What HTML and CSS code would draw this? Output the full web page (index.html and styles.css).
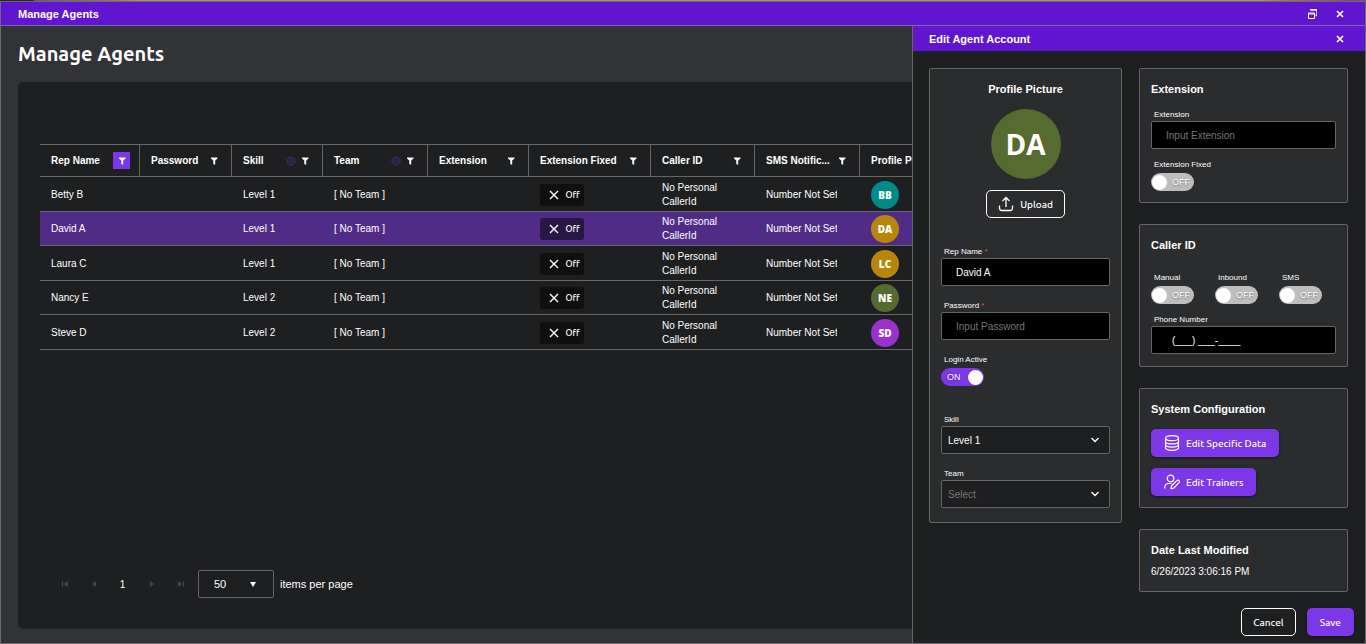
FILE: index.html
```html
<!DOCTYPE html>
<html lang="en">
<head>
    <meta charset="UTF-8">
    <meta name="viewport" content="width=device-width, initial-scale=1.0">
    <title>Manage Agents</title>
    <link rel="stylesheet" href="styles.css">
</head>
<body>
    <svg class="sprite" width="0" height="0" aria-hidden="true">
        <symbol id="icon-filter" viewBox="0 0 8 8"><path d="M1 .5h6.500v1L5.200 3.500v4H3.800l-.5-.8V3.500L1 1.500z" fill="currentColor"/></symbol>
        <symbol id="icon-gear" viewBox="0 0 12 12"><g fill="none" stroke="currentColor"><circle cx="6" cy="6" r="5.2" stroke-width="1.2" stroke-dasharray="2.3 1.78"/><circle cx="6" cy="6" r="4.200"/><circle cx="6" cy="6" r="1.7"/></g></symbol>
        <symbol id="icon-x" viewBox="0 0 10 10"><path d="M1 1l8 8M9 1L1 9" fill="none" stroke="currentColor" stroke-width="1.4"/></symbol>
        <symbol id="icon-close" viewBox="0 0 8 8"><path d="M1 1l6 6M7 1L1 7" fill="none" stroke="currentColor" stroke-width="1.7"/></symbol>
        <symbol id="icon-chevron" viewBox="0 0 8 6"><path d="M.5 1L4 4.500 7.500 1" fill="none" stroke="currentColor" stroke-width="1.3"/></symbol>
    </svg>

    <div class="window">
        <header class="title-bar">
            <span>Manage Agents</span>
            <div class="window-actions">
                <button class="icon-button" aria-label="Restore">
                    <svg width="9" height="10" viewBox="0 0 9 10"><path d="M2 0h7v6.5H7.5M2.5 1h6" fill="none" stroke="currentColor" stroke-width="1.4"/><path d="M.5 4h6v5.5h-6zM.5 5h6" fill="none" stroke="currentColor"/></svg>
                </button>
                <button class="icon-button" aria-label="Close window"><svg width="8" height="8"><use href="#icon-close"/></svg></button>
            </div>
        </header>

        <div class="window-body">
            <main class="content">
                <h1>Manage Agents</h1>
                <section class="card">
                    <table class="agents">
                        <colgroup>
                            <col class="col-name"><col class="col-password"><col class="col-skill"><col class="col-team"><col class="col-extension"><col class="col-fixed"><col class="col-caller"><col class="col-sms"><col class="col-picture">
                        </colgroup>
                        <thead>
                            <tr>
                                <th><div class="head"><span>Rep Name</span><button class="filter active" aria-label="Filter Rep Name"><svg width="8" height="8"><use href="#icon-filter"/></svg></button></div></th>
                                <th><div class="head"><span>Password</span><button class="filter" aria-label="Filter Password"><svg width="8" height="8"><use href="#icon-filter"/></svg></button></div></th>
                                <th><div class="head"><span>Skill</span><button class="gear" aria-label="Skill settings"><svg width="10" height="10"><use href="#icon-gear"/></svg></button><button class="filter" aria-label="Filter Skill"><svg width="8" height="8"><use href="#icon-filter"/></svg></button></div></th>
                                <th><div class="head"><span>Team</span><button class="gear" aria-label="Team settings"><svg width="10" height="10"><use href="#icon-gear"/></svg></button><button class="filter" aria-label="Filter Team"><svg width="8" height="8"><use href="#icon-filter"/></svg></button></div></th>
                                <th><div class="head"><span>Extension</span><button class="filter" aria-label="Filter Extension"><svg width="8" height="8"><use href="#icon-filter"/></svg></button></div></th>
                                <th><div class="head"><span>Extension Fixed</span><button class="filter" aria-label="Filter Extension Fixed"><svg width="8" height="8"><use href="#icon-filter"/></svg></button></div></th>
                                <th><div class="head"><span>Caller ID</span><button class="filter" aria-label="Filter Caller ID"><svg width="8" height="8"><use href="#icon-filter"/></svg></button></div></th>
                                <th><div class="head"><span>SMS Notific...</span><button class="filter" aria-label="Filter SMS Notifications"><svg width="8" height="8"><use href="#icon-filter"/></svg></button></div></th>
                                <th><div class="head"><span>Profile Picture</span></div></th>
                            </tr>
                        </thead>
                        <tbody>
                            <tr>
                                <td>Betty B</td><td></td><td>Level 1</td><td>[ No Team ]</td><td></td>
                                <td><button class="state"><svg width="10" height="10"><use href="#icon-x"/></svg>Off</button></td>
                                <td>No Personal CallerId</td><td><div class="clip">Number Not Set</div></td>
                                <td><span class="avatar teal">BB</span></td>
                            </tr>
                            <tr class="selected">
                                <td>David A</td><td></td><td>Level 1</td><td>[ No Team ]</td><td></td>
                                <td><button class="state"><svg width="10" height="10"><use href="#icon-x"/></svg>Off</button></td>
                                <td>No Personal CallerId</td><td><div class="clip">Number Not Set</div></td>
                                <td><span class="avatar gold">DA</span></td>
                            </tr>
                            <tr>
                                <td>Laura C</td><td></td><td>Level 1</td><td>[ No Team ]</td><td></td>
                                <td><button class="state"><svg width="10" height="10"><use href="#icon-x"/></svg>Off</button></td>
                                <td>No Personal CallerId</td><td><div class="clip">Number Not Set</div></td>
                                <td><span class="avatar gold">LC</span></td>
                            </tr>
                            <tr>
                                <td>Nancy E</td><td></td><td>Level 2</td><td>[ No Team ]</td><td></td>
                                <td><button class="state"><svg width="10" height="10"><use href="#icon-x"/></svg>Off</button></td>
                                <td>No Personal CallerId</td><td><div class="clip">Number Not Set</div></td>
                                <td><span class="avatar olive">NE</span></td>
                            </tr>
                            <tr>
                                <td>Steve D</td><td></td><td>Level 2</td><td>[ No Team ]</td><td></td>
                                <td><button class="state"><svg width="10" height="10"><use href="#icon-x"/></svg>Off</button></td>
                                <td>No Personal CallerId</td><td><div class="clip">Number Not Set</div></td>
                                <td><span class="avatar violet">SD</span></td>
                            </tr>
                        </tbody>
                    </table>

                    <nav class="pager" aria-label="Pages">
                        <button class="page-arrow" aria-label="First page" disabled><svg width="6" height="6" viewBox="0 0 6 6"><path d="M0 0h1v6H0zM6 0v6L1.500 3z" fill="currentColor"/></svg></button>
                        <button class="page-arrow" aria-label="Previous page" disabled><svg width="6" height="6" viewBox="0 0 6 6"><path d="M5 0v6L1 3z" fill="currentColor"/></svg></button>
                        <button class="page-number">1</button>
                        <button class="page-arrow" aria-label="Next page" disabled><svg width="6" height="6" viewBox="0 0 6 6"><path d="M1 0v6l4-3z" fill="currentColor"/></svg></button>
                        <button class="page-arrow" aria-label="Last page" disabled><svg width="6" height="6" viewBox="0 0 6 6"><path d="M5 0h1v6H5zM0 0v6l4.500-3z" fill="currentColor"/></svg></button>
                        <div class="dropdown page-size">
                            <select id="page-size"><option>50</option><option>100</option></select>
                            <svg width="6" height="5" viewBox="0 0 6 5"><path d="M0 0h6L3 5z" fill="currentColor"/></svg>
                        </div>
                        <label for="page-size">items per page</label>
                    </nav>
                </section>
            </main>

            <aside class="drawer">
                <header class="title-bar drawer-title">
                    <span>Edit Agent Account</span>
                    <button class="icon-button" aria-label="Close panel"><svg width="8" height="8"><use href="#icon-close"/></svg></button>
                </header>

                <form class="drawer-form">
                    <section class="panel profile">
                        <h2>Profile Picture</h2>
                        <span class="avatar large olive">DA</span>
                        <button type="button" class="button outline">
                            <svg width="16" height="16" viewBox="0 0 16 16"><path d="M8 11V2M4.500 5L8 1.500 11.500 5M1.500 9.500V12a2.500 2.500 0 0 0 2.500 2.500h8a2.500 2.500 0 0 0 2.500-2.500V9.500" fill="none" stroke="currentColor" stroke-width="1.300"/></svg>
                            Upload
                        </button>
                        <div class="fields">
                            <div class="field">
                                <label for="rep-name">Rep Name <span class="required">*</span></label>
                                <input type="text" id="rep-name" value="David A">
                            </div>
                            <div class="field">
                                <label for="password">Password <span class="required">*</span></label>
                                <input type="password" id="password" placeholder="Input Password">
                            </div>
                            <div class="field login">
                                <label for="login-active">Login Active</label>
                                <div class="switch"><span class="on">ON</span><input type="checkbox" id="login-active" checked><span class="off">OFF</span></div>
                            </div>
                            <div class="field">
                                <label for="skill">Skill</label>
                                <div class="dropdown">
                                    <select id="skill"><option>Level 1</option><option>Level 2</option></select>
                                    <svg width="8" height="6"><use href="#icon-chevron"/></svg>
                                </div>
                            </div>
                            <div class="field">
                                <label for="team">Team</label>
                                <div class="dropdown">
                                    <select id="team" class="empty"><option>Select</option></select>
                                    <svg width="8" height="6"><use href="#icon-chevron"/></svg>
                                </div>
                            </div>
                        </div>
                    </section>

                    <div class="side">
                        <section class="panel extension">
                            <h2>Extension</h2>
                            <div class="field">
                                <label for="extension">Extension</label>
                                <input type="text" id="extension" placeholder="Input Extension">
                            </div>
                            <div class="field">
                                <label for="extension-fixed">Extension Fixed</label>
                                <div class="switch"><span class="on">ON</span><input type="checkbox" id="extension-fixed"><span class="off">OFF</span></div>
                            </div>
                        </section>

                        <section class="panel caller">
                            <h2>Caller ID</h2>
                            <div class="switches">
                                <div class="field">
                                    <label for="manual">Manual</label>
                                    <div class="switch"><span class="on">ON</span><input type="checkbox" id="manual"><span class="off">OFF</span></div>
                                </div>
                                <div class="field">
                                    <label for="inbound">Inbound</label>
                                    <div class="switch"><span class="on">ON</span><input type="checkbox" id="inbound"><span class="off">OFF</span></div>
                                </div>
                                <div class="field">
                                    <label for="sms">SMS</label>
                                    <div class="switch"><span class="on">ON</span><input type="checkbox" id="sms"><span class="off">OFF</span></div>
                                </div>
                            </div>
                            <div class="field">
                                <label for="phone">Phone Number</label>
                                <input type="text" id="phone" class="phone" value="(___) ___-____">
                            </div>
                        </section>

                        <section class="panel system">
                            <h2>System Configuration</h2>
                            <button type="button" class="button primary">
                                <svg width="16" height="16" viewBox="0 0 16 16"><g fill="none" stroke="currentColor" stroke-width="1.200"><ellipse cx="8" cy="3.200" rx="6.500" ry="2.500"/><path d="M1.500 3.200v9.600c0 1.400 2.900 2.500 6.500 2.500s6.500-1.100 6.500-2.500V3.200M1.500 6.400c0 1.400 2.900 2.500 6.500 2.500s6.500-1.100 6.500-2.500M1.500 9.600c0 1.400 2.900 2.500 6.500 2.500s6.500-1.100 6.500-2.500"/></g></svg>
                                Edit Specific Data
                            </button>
                            <button type="button" class="button primary">
                                <svg width="16" height="16" viewBox="0 0 16 16"><g fill="none" stroke="currentColor" stroke-width="1.200" stroke-linejoin="round"><circle cx="6.500" cy="4.500" r="3.300"/><path d="M.7 14.500v-1.300A4.200 4.200 0 0 1 5 9.500h2.500"/><path d="M7 14.800l.6-3.100 5.200-5.100a1.500 1.500 0 0 1 2.200 0 1.500 1.500 0 0 1 0 2.100l-5.100 5.300z"/></g></svg>
                                Edit Trainers
                            </button>
                        </section>

                        <section class="panel modified">
                            <h2>Date Last Modified</h2>
                            <p>6/26/2023 3:06:16 PM</p>
                        </section>
                    </div>
                </form>

                <footer class="drawer-footer">
                    <button class="button outline">Cancel</button>
                    <button class="button primary">Save</button>
                </footer>
            </aside>
        </div>
    </div>
</body>
</html>
```
FILE: styles.css
```css
* {
    box-sizing: border-box;
}

body {
    margin: 0;
    padding-top: 1px;
    background: linear-gradient(to right, #2a2433 34px, #71508a 34px, #a06a68 110px, #a08d7c 135px, #a08d7c 1262px, #a06a68 1290px, #71508a 1350px);
    color: #fff;
    font-family: "Liberation Sans", Arial, sans-serif;
    font-size: 10px;
}

button,
input,
select {
    font-family: inherit;
    font-size: inherit;
    color: inherit;
}

button {
    display: inline-flex;
    align-items: center;
    justify-content: center;
    padding: 0;
    border: none;
    background: none;
    cursor: pointer;
}

.sprite {
    position: absolute;
}

.window {
    display: flex;
    flex-direction: column;
    min-height: calc(100vh - 1px);
    border: 1px solid #6b6b6e;
    background-color: #323336;
}

.title-bar {
    display: flex;
    align-items: center;
    justify-content: space-between;
    height: 24px;
    padding: 0 17px;
    border-bottom: 1px solid #7868a4;
    background-color: #6016d0;
    font-size: 11px;
    font-weight: bold;
}

.window-actions {
    display: flex;
    gap: 12px;
}

.icon-button {
    width: 16px;
    height: 16px;
}

.window-body {
    display: grid;
    grid-template-columns: minmax(0, 1fr) 453px;
    flex: 1;
}

/* Agent list */
.content {
    display: flex;
    flex-direction: column;
    padding: 16px 0 14px 17px;
    overflow: hidden;
}

h1 {
    margin: 0 0 16px;
    font-family: Ubuntu, "Noto Sans", sans-serif;
    font-size: 20px;
    line-height: 24px;
}

.card {
    display: flex;
    flex: 1;
    flex-direction: column;
    justify-content: space-between;
    padding: 62px 0 31px 22px;
    border-radius: 5px 0 0 5px;
    background-color: #1e1f21;
}

.agents {
    width: 960px;
    border-collapse: separate;
    border-spacing: 0;
    table-layout: fixed;
}

.col-name { width: 100px; }
.col-password { width: 92px; }
.col-skill { width: 91px; }
.col-team { width: 105px; }
.col-extension { width: 101px; }
.col-fixed { width: 122px; }
.col-caller { width: 104px; }
.col-sms { width: 105px; }

.agents th {
    height: 33px;
    padding: 0 9px 0 11px;
    border: solid #666;
    border-width: 1px 1px 1px 0;
    text-align: left;
    white-space: nowrap;
}

.agents td {
    height: 35px;
    padding: 1px 11px 0;
    border-bottom: 1px solid #666;
    line-height: 14px;
}

.agents tr:nth-child(even) td {
    height: 34px;
}

.agents .selected td {
    background-color: #502c87;
}

.clip {
    width: 71px;
    overflow: hidden;
    white-space: nowrap;
}

.head {
    display: flex;
    align-items: center;
}

.head span {
    flex: 1;
}

.filter {
    width: 17px;
    height: 17px;
}

.filter.active {
    background-color: #7c37e8;
}

.gear {
    color: #48297a;
}

.state {
    gap: 6px;
    width: 44px;
    height: 22px;
    padding-left: 5px;
    border-radius: 3px;
    background-color: rgba(0, 0, 0, 0.5);
    font-family: Ubuntu, "Noto Sans", sans-serif;
    font-size: 9px;
    font-weight: 500;
    vertical-align: middle;
}

.avatar {
    display: flex;
    align-items: center;
    justify-content: center;
    width: 28px;
    height: 28px;
    border-radius: 50%;
    font-family: "Open Sans", "Noto Sans", sans-serif;
    font-weight: 800;
}

.avatar.large {
    width: 70px;
    height: 70px;
    font-size: 28px;
    font-weight: bold;
}

.teal { background-color: #008b8b; }
.gold { background-color: #b8860b; }
.olive { background-color: #556b2f; }
.violet { background-color: #9932cc; }

/* Pager */
.pager {
    display: flex;
    align-items: center;
    padding-left: 10px;
    font-size: 11px;
}

.page-arrow,
.page-number {
    width: 29px;
    height: 28px;
}

.page-arrow {
    color: #444548;
}

.page-number {
    font-size: 10px;
}

.page-size {
    width: 76px;
    margin: 0 6px 0 3px;
}

/* Drawer */
.drawer {
    display: flex;
    flex-direction: column;
    border-left: 1px solid #666;
    background-color: #1e1f21;
}

.drawer-title {
    height: 25px;
    padding: 0 17px 0 16px;
    border-bottom: none;
}

.drawer-form {
    display: grid;
    grid-template-columns: 193px 1fr;
    align-items: start;
    gap: 17px;
    padding: 17px 17px 0 16px;
}

.side {
    display: grid;
    gap: 21px;
}

.panel {
    padding: 14px 11px 11px;
    border: 1px solid #666;
    border-radius: 2px;
    background-color: #2b2c2e;
}

.panel h2 {
    margin: 0;
    font-size: 11px;
    line-height: 12px;
}

.profile {
    display: flex;
    flex-direction: column;
    align-items: center;
    gap: 11px;
    padding-bottom: 14px;
}

.profile .avatar {
    margin-top: 3px;
}

.fields {
    display: grid;
    gap: 13px;
    width: 100%;
    margin-top: 16px;
}

.field label {
    display: block;
    padding-left: 3px;
    font-size: 8px;
    line-height: 13px;
}

.field input[type="text"],
.field input[type="password"] {
    display: block;
    width: 100%;
    height: 28px;
    padding: 0 14px;
    border: 1px solid #666;
    border-radius: 2px;
    background-color: #000;
}

.field input::placeholder {
    color: #757575;
}

.field input.phone[type="text"] {
    padding-left: 20px;
}

.required {
    color: #f0582f;
}

.login {
    margin-bottom: 14px;
}

.dropdown {
    display: grid;
    grid-template-columns: 1fr 30px;
    align-items: center;
    justify-items: center;
}

.dropdown select {
    grid-area: 1 / 1 / 2 / 3;
    width: 100%;
    height: 28px;
    padding: 0 6px;
    border: 1px solid #666;
    border-radius: 2px;
    background-color: #1e1f21;
    appearance: none;
}

.dropdown select.empty {
    color: #757575;
}

.dropdown svg {
    grid-area: 1 / 2;
    pointer-events: none;
}

.page-size {
    grid-template-columns: 1fr 43px;
}

.page-size select {
    padding-left: 15px;
}

.switch {
    display: flex;
    align-items: center;
    justify-content: space-between;
    width: 43px;
    height: 18px;
    margin-top: 2px;
    padding: 0 4px 0 1px;
    border-radius: 9px;
    background-color: #bdbdbd;
    font-size: 9px;
    text-shadow: 0 1px 2px rgba(0, 0, 0, 0.4);
}

.switch input {
    width: 15px;
    height: 15px;
    margin: 0;
    border-radius: 50%;
    background-color: #fff;
    appearance: none;
}

.switch .on {
    display: none;
}

.switch:has(:checked) {
    padding: 0 1px 0 6px;
    background-color: #7c37e8;
}

.switch:has(:checked) .on {
    display: block;
}

.switch:has(:checked) .off {
    display: none;
}

.extension,
.caller {
    display: grid;
    gap: 9px;
}

.extension h2 {
    margin-bottom: 4px;
}

.caller {
    padding-bottom: 12px;
}

.caller h2 {
    margin-bottom: 11px;
}

.switches {
    display: flex;
    gap: 21px;
}

.system {
    display: grid;
    justify-items: start;
    gap: 11px;
}

.system h2 {
    margin-bottom: 3px;
}

.modified p {
    margin: 10px 0 2px;
    line-height: 12px;
}

.button {
    gap: 6px;
    height: 28px;
    padding: 0 11px;
    border-radius: 5px;
    font-family: Ubuntu, "Noto Sans", sans-serif;
    font-size: 10px;
    font-weight: 500;
}

.button.outline {
    border: 1px solid #fff;
}

.button.primary {
    padding: 0 13px;
    background-color: #7c37e8;
    box-shadow: 0 1px 3px rgba(0, 0, 0, 0.5);
}

.drawer-footer {
    display: flex;
    justify-content: flex-end;
    gap: 11px;
    margin-top: auto;
    padding: 0 11px 7px;
}
```
